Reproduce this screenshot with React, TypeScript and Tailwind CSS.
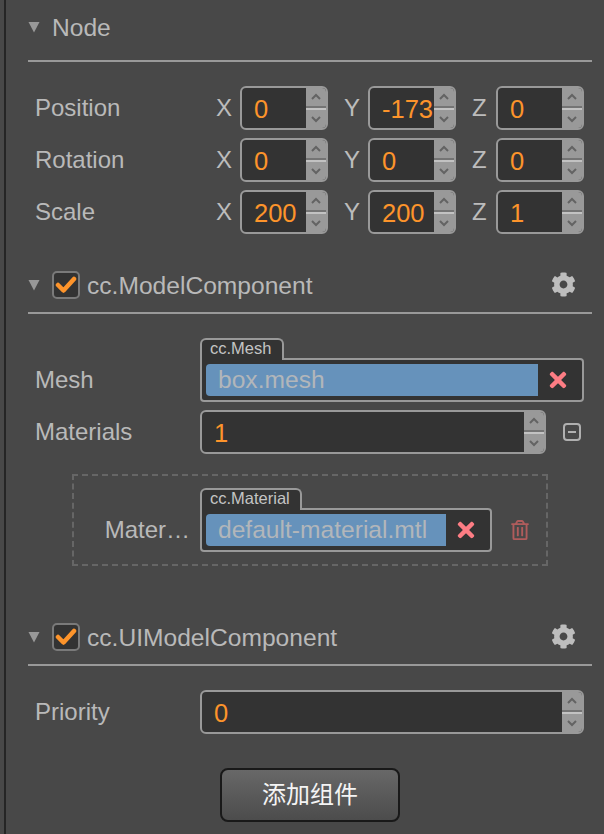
import { FaCog, FaTimes, FaRegTrashAlt } from "react-icons/fa";

function Chevron({ up }: { up?: boolean }) {
  return (
    <svg width="12" height="8" viewBox="0 0 12 8" fill="none" stroke="#636363" strokeWidth="2">
      <path d={up ? "M2 6 L6 2 L10 6" : "M2 2 L6 6 L10 2"} />
    </svg>
  );
}

function NumberInput({ value, className }: { value: string; className: string }) {
  return (
    <div className={`flex h-[44px] overflow-hidden rounded-[6px] border-2 border-[#999999] bg-[#333333] ${className}`}>
      <div className="flex min-w-0 flex-1 items-center overflow-hidden whitespace-nowrap pl-[12px] pt-[3px] text-[25.5px] text-[#fd942b]">{value}</div>
      <div className="flex w-[20px] flex-col bg-[#999999]">
        <div className="flex flex-1 items-center justify-center"><Chevron up /></div>
        <div className="h-[2px] bg-[#747474]" />
        <div className="h-[2px] bg-[#c2c2c2]" />
        <div className="flex flex-1 items-center justify-center"><Chevron /></div>
      </div>
    </div>
  );
}

function Axis({ axis, value }: { axis: string; value: string }) {
  return (
    <div className="flex w-[112px] items-center">
      <span className="w-[24px] text-[24px] text-[#bcbcbc]">{axis}</span>
      <NumberInput value={value} className="w-[88px]" />
    </div>
  );
}

function VecRow({ label, x, y, z }: { label: string; x: string; y: string; z: string }) {
  return (
    <div className="flex items-center gap-[16px] pl-[7px]">
      <span className="w-[165px]">{label}</span>
      <Axis axis="X" value={x} />
      <Axis axis="Y" value={y} />
      <Axis axis="Z" value={z} />
    </div>
  );
}

function Triangle() {
  return (
    <svg width="12" height="12" viewBox="0 0 12 12" className="shrink-0">
      <path d="M0.5 1 H11.5 L6 11.5 Z" fill="#989898" />
    </svg>
  );
}

function Header({ title, component }: { title: string; component?: boolean }) {
  return (
    <div className={`flex items-center border-b-2 border-[#999999] ${component ? "h-[56px]" : "h-[62px] pb-[6px]"}`}>
      <Triangle />
      {component ? (
        <div className="ml-[12px] flex h-[28px] w-[28px] items-center justify-center rounded-[5px] border-2 border-[#7a7a7a] bg-[#333333]">
          <svg width="22" height="18" viewBox="0 0 22 18" fill="none" stroke="#fd942b" strokeWidth="4.5" strokeLinecap="round" strokeLinejoin="round">
            <path d="M3 9 L8.5 14.5 L19 3" />
          </svg>
        </div>
      ) : null}
      <span className={`${component ? "ml-[7px]" : "ml-[12px]"} mt-[2px] text-[24.6px] text-[#b9b9b9]`}>{title}</span>
      {component ? <FaCog size={25} color="#bdbdbd" className="ml-auto mr-[16px] -mt-[2px]" /> : null}
    </div>
  );
}

function ObjectField({ type, value, tabWidth, className }: { type: string; value: string; tabWidth: string; className: string }) {
  return (
    <div className={`flex flex-col ${className}`}>
      <div className={`relative z-10 -mb-[2px] h-[22px] rounded-t-[6px] border-2 border-b-0 border-[#999999] bg-[#333333] pl-[8px] text-[16.5px] leading-[16px] text-[#c4c4c4] ${tabWidth}`}>{type}</div>
      <div className="flex h-[44px] items-center rounded-b-[4px] rounded-tr-[4px] border-2 border-[#999999] bg-[#333333] p-[4px]">
        <div className="flex h-[32px] flex-1 items-center rounded-l-[4px] bg-[#6692bb] pl-[12px] text-[24.6px] text-[#b2b6ba]">{value}</div>
        <div className="flex w-[40px] items-center justify-center"><FaTimes size={24} color="#fd7d84" /></div>
      </div>
    </div>
  );
}

export default function App() {
  return (
    <div className="flex h-[834px] w-[604px] overflow-hidden bg-[#484848] font-['Liberation_Sans','Noto_Sans_CJK_SC',sans-serif] text-[24px] text-[#b9b9b9]">
      <div className="ml-[4px] h-full w-[2px] shrink-0 bg-[#252525]" />
      <main className="ml-[22px] w-[564px]">
        <Header title="Node" />
        <div className="flex flex-col gap-[8px] pt-[24px]">
          <VecRow label="Position" x="0" y="-173" z="0" />
          <VecRow label="Rotation" x="0" y="0" z="0" />
          <VecRow label="Scale" x="200" y="200" z="1" />
        </div>

        <div className="mt-[24px]"><Header title="cc.ModelComponent" component /></div>
        <div className="flex flex-col pt-[24px]">
          <div className="flex items-end pl-[7px]">
            <span className="flex h-[44px] w-[165px] items-center">Mesh</span>
            <ObjectField type="cc.Mesh" value="box.mesh" tabWidth="w-[84px]" className="w-[384px]" />
          </div>
          <div className="mt-[8px] flex items-center pl-[7px]">
            <span className="w-[165px]">Materials</span>
            <NumberInput value="1" className="w-[346px]" />
            <svg width="18" height="18" viewBox="0 0 18 18" fill="none" stroke="#b0b0b0" strokeWidth="2" className="ml-[17px]">
              <rect x="1" y="1" width="16" height="16" rx="3" />
              <path d="M5 9 H13" />
            </svg>
          </div>
          <div className="ml-[44px] mt-[20px] flex h-[92px] w-[476px] items-end border-2 border-dashed border-[#666666] pb-[12px]">
            <span className="mb-[4px] w-[116px] text-right">Mater…</span>
            <ObjectField type="cc.Material" value="default-material.mtl" tabWidth="w-[102px]" className="ml-[10px] w-[292px]" />
            <FaRegTrashAlt size={20} color="#b05c5c" className="mb-[12px] ml-[18px]" />
          </div>
        </div>

        <div className="mt-[44px]"><Header title="cc.UIModelComponent" component /></div>
        <div className="flex items-center pl-[7px] pt-[24px]">
          <span className="w-[165px]">Priority</span>
          <NumberInput value="0" className="w-[384px]" />
        </div>
        <div className="mt-[34px] flex justify-center">
          <button className="h-[54px] w-[180px] rounded-[8px] border-2 border-[#191919] bg-gradient-to-b from-[#686868] to-[#4c4c4c] text-[24px] text-[#f4f4f4]">添加组件</button>
        </div>
      </main>
    </div>
  );
}
